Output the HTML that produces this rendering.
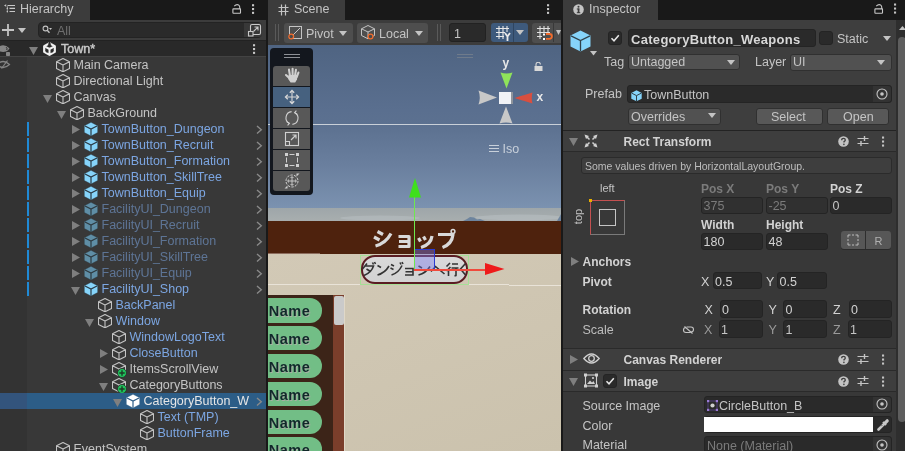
<!DOCTYPE html><html><head><meta charset="utf-8"><style>
html,body{margin:0;padding:0;width:905px;height:451px;overflow:hidden;background:#191919;font-family:"Liberation Sans", sans-serif;}
div,svg{box-sizing:border-box;}
</style></head><body><div style="position:relative;width:905px;height:451px;overflow:hidden;will-change:transform;"><div style="position:absolute;left:0px;top:0px;width:266px;height:451px;background:#383838;"></div><div style="position:absolute;left:0px;top:0px;width:266px;height:20px;background:#191919;"></div><div style="position:absolute;left:0px;top:0px;width:90px;height:20px;background:#3c3c3c;"></div><svg style="position:absolute;left:3px;top:3px;" width="14" height="12" viewBox="0 0 14 12"><path d="M4.5 2.5H12 M6.5 5.3H12 M6.5 8.5H12" stroke="#c8c8c8" stroke-width="1.2"/><path d="M1 2.5L3.2 1.2V3.8Z M3.3 5.3L5 4.2V6.4Z M3.3 8.5L5 7.4V9.6Z" fill="#c8c8c8"/><path d="M4.3 3V9.5" stroke="#c8c8c8" stroke-width="0.6"/></svg><div style="position:absolute;left:20px;top:2.5px;font-size:12.5px;line-height:12.5px;color:#c4c4c4;font-weight:400;white-space:nowrap;">Hierarchy</div><svg style="position:absolute;left:231.5px;top:2.5px;" width="10" height="11" viewBox="0 0 10 11"><path d="M2.3 3.2Q4.3 0.9 6.6 1.9Q7.9 2.7 7.9 5.9" fill="none" stroke="#c8c8c8" stroke-width="1.1"/><rect x="0.9" y="5.9" width="7.6" height="4.3" rx="0.5" fill="none" stroke="#c8c8c8" stroke-width="1.1"/></svg><svg style="position:absolute;left:251px;top:3px;" width="4" height="13" viewBox="0 0 4 13"><g fill="#c8c8c8"><rect x="1" y="1.2" width="2.1" height="2.1"/><rect x="1" y="5" width="2.1" height="2.1"/><rect x="1" y="8.8" width="2.1" height="2.1"/></g></svg><div style="position:absolute;left:0px;top:20px;width:266px;height:19.5px;background:#3c3c3c;"></div><svg style="position:absolute;left:1px;top:23px;" width="14" height="14" viewBox="0 0 14 14"><path d="M7 1V13 M1 7H13" stroke="#c4c4c4" stroke-width="1.8"/></svg><svg style="position:absolute;left:18px;top:28px;" width="8" height="5" viewBox="0 0 8 5"><path d="M0 0L8 0L4.0 5Z" fill="#c4c4c4"/></svg><div style="position:absolute;left:38px;top:22px;width:224px;height:16px;background:#2a2a2a;border:1px solid #232323;border-radius:4px;"></div><svg style="position:absolute;left:42px;top:25px;" width="11" height="10" viewBox="0 0 11 10"><circle cx="3.5" cy="3.5" r="2.4" fill="none" stroke="#c4c4c4" stroke-width="1.1"/><path d="M5.2 5.2L7.5 7.8" stroke="#c4c4c4" stroke-width="1.3"/><path d="M7 3L10 3L8.5 5Z" fill="#c4c4c4"/></svg><div style="position:absolute;left:57px;top:25px;font-size:12.5px;line-height:12.5px;color:#6f6f6f;font-weight:400;white-space:nowrap;">All</div><div style="position:absolute;left:244px;top:23px;width:18px;height:14px;background:#383838;border-radius:0 3px 3px 0;"></div><svg style="position:absolute;left:247px;top:23px;" width="15" height="15" viewBox="0 0 15 15"><rect x="3.5" y="1.5" width="10" height="10" rx="1.5" fill="none" stroke="#c8c8c8" stroke-width="1.1"/><rect x="1.5" y="8.5" width="4.5" height="4.5" fill="#383838" stroke="#c8c8c8" stroke-width="1.1"/><path d="M6.5 8.5L11 4 M7.5 4H11V7.5" fill="none" stroke="#c8c8c8" stroke-width="1.1"/></svg><div style="position:absolute;left:0px;top:39.5px;width:27px;height:411.5px;background:#333333;"></div><div style="position:absolute;left:0px;top:40px;width:266px;height:1px;background:#222222;"></div><div style="position:absolute;left:0px;top:41px;width:266px;height:15px;background:#292929;"></div><div style="position:absolute;left:0px;top:56px;width:266px;height:1px;background:#434343;"></div><svg style="position:absolute;left:0px;top:44px;" width="11" height="13" viewBox="0 0 11 13"><path d="M-3 4.2Q3 -1.5 9.5 4.2Q8.5 6.5 6 7.5Q3 8.5 -3 7Z" fill="#858585"/><path d="M6.2 3.2Q7.5 4.5 6.8 6" stroke="#2a2a2a" stroke-width="1" fill="none"/><rect x="6" y="8" width="4" height="4" rx="0.8" fill="#858585"/></svg><svg style="position:absolute;left:0px;top:59px;" width="11" height="11" viewBox="0 0 11 11"><path d="M-3 5.5Q3 -0.5 9.5 5.5Q3 11.5 -3 5.5Z" fill="none" stroke="#858585" stroke-width="1.2"/><path d="M1.5 9.5L7.5 1.5" stroke="#858585" stroke-width="1.2"/></svg><svg style="position:absolute;left:29px;top:47px;" width="9" height="8" viewBox="0 0 9 8"><path d="M0 0L9 0L4.5 8Z" fill="#7f7f7f"/></svg><svg style="position:absolute;left:43px;top:42px;" width="13" height="14" viewBox="0 0 13 14"><path d="M6.5 1.2L11.8 4.1V9.9L6.5 12.8L1.2 9.9V4.1Z" fill="none" stroke="#f0f0f0" stroke-width="2.2" stroke-linejoin="round"/><path d="M6.5 7V13 M6.5 7L1.5 4.3 M6.5 7L11.5 4.3" stroke="#f0f0f0" stroke-width="2"/><path d="M6.5 0V4.5" stroke="#2c2c2c" stroke-width="1.4"/><path d="M4.6 1.5L6.5 4.6L8.4 1.5Z" fill="#2c2c2c"/><path d="M3 8.2L4.4 10.6 M10 8.2L8.6 10.6" stroke="#2c2c2c" stroke-width="1.2"/></svg><div style="position:absolute;left:61px;top:43px;font-size:12.5px;line-height:12.5px;color:#c8c8c8;font-weight:400;white-space:nowrap;-webkit-text-stroke:0.45px #c8c8c8;">Town*</div><svg style="position:absolute;left:252px;top:43px;" width="4" height="13" viewBox="0 0 4 13"><g fill="#c8c8c8"><rect x="1" y="1.2" width="2.1" height="2.1"/><rect x="1" y="5" width="2.1" height="2.1"/><rect x="1" y="8.8" width="2.1" height="2.1"/></g></svg><svg style="position:absolute;left:55.5px;top:58px;" width="14" height="14" viewBox="0 0 14 14"><path d="M7 0.5L13.5 3.8L13.5 10.5L7 13.8L0.5 10.5L0.5 3.8Z M0.5 3.8L7 7L13.5 3.8 M7 7L7 13.8" fill="none" stroke="#c4c4c4" stroke-width="1.1" stroke-linejoin="round"/></svg><div style="position:absolute;left:73.5px;top:59px;font-size:12.5px;line-height:12.5px;color:#c4c4c4;font-weight:400;white-space:nowrap;">Main Camera</div><svg style="position:absolute;left:55.5px;top:74px;" width="14" height="14" viewBox="0 0 14 14"><path d="M7 0.5L13.5 3.8L13.5 10.5L7 13.8L0.5 10.5L0.5 3.8Z M0.5 3.8L7 7L13.5 3.8 M7 7L7 13.8" fill="none" stroke="#c4c4c4" stroke-width="1.1" stroke-linejoin="round"/></svg><div style="position:absolute;left:73.5px;top:75px;font-size:12.5px;line-height:12.5px;color:#c4c4c4;font-weight:400;white-space:nowrap;">Directional Light</div><svg style="position:absolute;left:43px;top:95px;" width="9" height="8" viewBox="0 0 9 8"><path d="M0 0L9 0L4.5 8Z" fill="#7f7f7f"/></svg><svg style="position:absolute;left:55.5px;top:90px;" width="14" height="14" viewBox="0 0 14 14"><path d="M7 0.5L13.5 3.8L13.5 10.5L7 13.8L0.5 10.5L0.5 3.8Z M0.5 3.8L7 7L13.5 3.8 M7 7L7 13.8" fill="none" stroke="#c4c4c4" stroke-width="1.1" stroke-linejoin="round"/></svg><div style="position:absolute;left:73.5px;top:91px;font-size:12.5px;line-height:12.5px;color:#c4c4c4;font-weight:400;white-space:nowrap;">Canvas</div><svg style="position:absolute;left:57px;top:111px;" width="9" height="8" viewBox="0 0 9 8"><path d="M0 0L9 0L4.5 8Z" fill="#7f7f7f"/></svg><svg style="position:absolute;left:69.5px;top:106px;" width="14" height="14" viewBox="0 0 14 14"><path d="M7 0.5L13.5 3.8L13.5 10.5L7 13.8L0.5 10.5L0.5 3.8Z M0.5 3.8L7 7L13.5 3.8 M7 7L7 13.8" fill="none" stroke="#c4c4c4" stroke-width="1.1" stroke-linejoin="round"/></svg><div style="position:absolute;left:87.5px;top:107px;font-size:12.5px;line-height:12.5px;color:#c4c4c4;font-weight:400;white-space:nowrap;">BackGround</div><div style="position:absolute;left:27px;top:122px;width:2px;height:14px;background:#1f8ad6;"></div><svg style="position:absolute;left:72px;top:125px;" width="8" height="9" viewBox="0 0 8 9"><path d="M0 0L8 4.5L0 9Z" fill="#7f7f7f"/></svg><svg style="position:absolute;left:84px;top:122px;" width="14" height="14" viewBox="0 0 14 14"><g opacity="1"><path d="M7 0.3L13.7 3.7L13.7 10.6L7 14L0.3 10.6L0.3 3.7Z" fill="#86d4fa" stroke="#2a3a44" stroke-width="0.6" stroke-opacity="0.7"/><path d="M1 4L7 7L13 4 M7 7L7 13.8" fill="none" stroke="#2a3a44" stroke-width="1.2"/></g></svg><div style="position:absolute;left:101.5px;top:123px;font-size:12.5px;line-height:12.5px;color:#7ca6e2;font-weight:400;white-space:nowrap;">TownButton_Dungeon</div><svg style="position:absolute;left:256px;top:125px;" width="7" height="10" viewBox="0 0 7 10"><path d="M1 1L5.3 4.8L1 8.6" fill="none" stroke="#8a8a8a" stroke-width="1.4" opacity="1"/></svg><div style="position:absolute;left:27px;top:138px;width:2px;height:14px;background:#1f8ad6;"></div><svg style="position:absolute;left:72px;top:141px;" width="8" height="9" viewBox="0 0 8 9"><path d="M0 0L8 4.5L0 9Z" fill="#7f7f7f"/></svg><svg style="position:absolute;left:84px;top:138px;" width="14" height="14" viewBox="0 0 14 14"><g opacity="1"><path d="M7 0.3L13.7 3.7L13.7 10.6L7 14L0.3 10.6L0.3 3.7Z" fill="#86d4fa" stroke="#2a3a44" stroke-width="0.6" stroke-opacity="0.7"/><path d="M1 4L7 7L13 4 M7 7L7 13.8" fill="none" stroke="#2a3a44" stroke-width="1.2"/></g></svg><div style="position:absolute;left:101.5px;top:139px;font-size:12.5px;line-height:12.5px;color:#7ca6e2;font-weight:400;white-space:nowrap;">TownButton_Recruit</div><svg style="position:absolute;left:256px;top:141px;" width="7" height="10" viewBox="0 0 7 10"><path d="M1 1L5.3 4.8L1 8.6" fill="none" stroke="#8a8a8a" stroke-width="1.4" opacity="1"/></svg><div style="position:absolute;left:27px;top:154px;width:2px;height:14px;background:#1f8ad6;"></div><svg style="position:absolute;left:72px;top:157px;" width="8" height="9" viewBox="0 0 8 9"><path d="M0 0L8 4.5L0 9Z" fill="#7f7f7f"/></svg><svg style="position:absolute;left:84px;top:154px;" width="14" height="14" viewBox="0 0 14 14"><g opacity="1"><path d="M7 0.3L13.7 3.7L13.7 10.6L7 14L0.3 10.6L0.3 3.7Z" fill="#86d4fa" stroke="#2a3a44" stroke-width="0.6" stroke-opacity="0.7"/><path d="M1 4L7 7L13 4 M7 7L7 13.8" fill="none" stroke="#2a3a44" stroke-width="1.2"/></g></svg><div style="position:absolute;left:101.5px;top:155px;font-size:12.5px;line-height:12.5px;color:#7ca6e2;font-weight:400;white-space:nowrap;">TownButton_Formation</div><svg style="position:absolute;left:256px;top:157px;" width="7" height="10" viewBox="0 0 7 10"><path d="M1 1L5.3 4.8L1 8.6" fill="none" stroke="#8a8a8a" stroke-width="1.4" opacity="1"/></svg><div style="position:absolute;left:27px;top:170px;width:2px;height:14px;background:#1f8ad6;"></div><svg style="position:absolute;left:72px;top:173px;" width="8" height="9" viewBox="0 0 8 9"><path d="M0 0L8 4.5L0 9Z" fill="#7f7f7f"/></svg><svg style="position:absolute;left:84px;top:170px;" width="14" height="14" viewBox="0 0 14 14"><g opacity="1"><path d="M7 0.3L13.7 3.7L13.7 10.6L7 14L0.3 10.6L0.3 3.7Z" fill="#86d4fa" stroke="#2a3a44" stroke-width="0.6" stroke-opacity="0.7"/><path d="M1 4L7 7L13 4 M7 7L7 13.8" fill="none" stroke="#2a3a44" stroke-width="1.2"/></g></svg><div style="position:absolute;left:101.5px;top:171px;font-size:12.5px;line-height:12.5px;color:#7ca6e2;font-weight:400;white-space:nowrap;">TownButton_SkillTree</div><svg style="position:absolute;left:256px;top:173px;" width="7" height="10" viewBox="0 0 7 10"><path d="M1 1L5.3 4.8L1 8.6" fill="none" stroke="#8a8a8a" stroke-width="1.4" opacity="1"/></svg><div style="position:absolute;left:27px;top:186px;width:2px;height:14px;background:#1f8ad6;"></div><svg style="position:absolute;left:72px;top:189px;" width="8" height="9" viewBox="0 0 8 9"><path d="M0 0L8 4.5L0 9Z" fill="#7f7f7f"/></svg><svg style="position:absolute;left:84px;top:186px;" width="14" height="14" viewBox="0 0 14 14"><g opacity="1"><path d="M7 0.3L13.7 3.7L13.7 10.6L7 14L0.3 10.6L0.3 3.7Z" fill="#86d4fa" stroke="#2a3a44" stroke-width="0.6" stroke-opacity="0.7"/><path d="M1 4L7 7L13 4 M7 7L7 13.8" fill="none" stroke="#2a3a44" stroke-width="1.2"/></g></svg><div style="position:absolute;left:101.5px;top:187px;font-size:12.5px;line-height:12.5px;color:#7ca6e2;font-weight:400;white-space:nowrap;">TownButton_Equip</div><svg style="position:absolute;left:256px;top:189px;" width="7" height="10" viewBox="0 0 7 10"><path d="M1 1L5.3 4.8L1 8.6" fill="none" stroke="#8a8a8a" stroke-width="1.4" opacity="1"/></svg><div style="position:absolute;left:27px;top:202px;width:2px;height:14px;background:#1f8ad6;"></div><svg style="position:absolute;left:72px;top:205px;" width="8" height="9" viewBox="0 0 8 9"><path d="M0 0L8 4.5L0 9Z" fill="#7f7f7f"/></svg><svg style="position:absolute;left:84px;top:202px;" width="14" height="14" viewBox="0 0 14 14"><g opacity="1"><path d="M7 0.3L13.7 3.7L13.7 10.6L7 14L0.3 10.6L0.3 3.7Z" fill="#5f8ea6" stroke="#2e3a40" stroke-width="0.6" stroke-opacity="0.7"/><path d="M1 4L7 7L13 4 M7 7L7 13.8" fill="none" stroke="#2e3a40" stroke-width="1.2"/></g></svg><div style="position:absolute;left:101.5px;top:203px;font-size:12.5px;line-height:12.5px;color:#7ca6e2;font-weight:400;white-space:nowrap;opacity:0.55;">FacilityUI_Dungeon</div><svg style="position:absolute;left:256px;top:205px;" width="7" height="10" viewBox="0 0 7 10"><path d="M1 1L5.3 4.8L1 8.6" fill="none" stroke="#8a8a8a" stroke-width="1.4" opacity="1"/></svg><div style="position:absolute;left:27px;top:218px;width:2px;height:14px;background:#1f8ad6;"></div><svg style="position:absolute;left:72px;top:221px;" width="8" height="9" viewBox="0 0 8 9"><path d="M0 0L8 4.5L0 9Z" fill="#7f7f7f"/></svg><svg style="position:absolute;left:84px;top:218px;" width="14" height="14" viewBox="0 0 14 14"><g opacity="1"><path d="M7 0.3L13.7 3.7L13.7 10.6L7 14L0.3 10.6L0.3 3.7Z" fill="#5f8ea6" stroke="#2e3a40" stroke-width="0.6" stroke-opacity="0.7"/><path d="M1 4L7 7L13 4 M7 7L7 13.8" fill="none" stroke="#2e3a40" stroke-width="1.2"/></g></svg><div style="position:absolute;left:101.5px;top:219px;font-size:12.5px;line-height:12.5px;color:#7ca6e2;font-weight:400;white-space:nowrap;opacity:0.55;">FacilityUI_Recruit</div><svg style="position:absolute;left:256px;top:221px;" width="7" height="10" viewBox="0 0 7 10"><path d="M1 1L5.3 4.8L1 8.6" fill="none" stroke="#8a8a8a" stroke-width="1.4" opacity="1"/></svg><div style="position:absolute;left:27px;top:234px;width:2px;height:14px;background:#1f8ad6;"></div><svg style="position:absolute;left:72px;top:237px;" width="8" height="9" viewBox="0 0 8 9"><path d="M0 0L8 4.5L0 9Z" fill="#7f7f7f"/></svg><svg style="position:absolute;left:84px;top:234px;" width="14" height="14" viewBox="0 0 14 14"><g opacity="1"><path d="M7 0.3L13.7 3.7L13.7 10.6L7 14L0.3 10.6L0.3 3.7Z" fill="#5f8ea6" stroke="#2e3a40" stroke-width="0.6" stroke-opacity="0.7"/><path d="M1 4L7 7L13 4 M7 7L7 13.8" fill="none" stroke="#2e3a40" stroke-width="1.2"/></g></svg><div style="position:absolute;left:101.5px;top:235px;font-size:12.5px;line-height:12.5px;color:#7ca6e2;font-weight:400;white-space:nowrap;opacity:0.55;">FacilityUI_Formation</div><svg style="position:absolute;left:256px;top:237px;" width="7" height="10" viewBox="0 0 7 10"><path d="M1 1L5.3 4.8L1 8.6" fill="none" stroke="#8a8a8a" stroke-width="1.4" opacity="1"/></svg><div style="position:absolute;left:27px;top:250px;width:2px;height:14px;background:#1f8ad6;"></div><svg style="position:absolute;left:72px;top:253px;" width="8" height="9" viewBox="0 0 8 9"><path d="M0 0L8 4.5L0 9Z" fill="#7f7f7f"/></svg><svg style="position:absolute;left:84px;top:250px;" width="14" height="14" viewBox="0 0 14 14"><g opacity="1"><path d="M7 0.3L13.7 3.7L13.7 10.6L7 14L0.3 10.6L0.3 3.7Z" fill="#5f8ea6" stroke="#2e3a40" stroke-width="0.6" stroke-opacity="0.7"/><path d="M1 4L7 7L13 4 M7 7L7 13.8" fill="none" stroke="#2e3a40" stroke-width="1.2"/></g></svg><div style="position:absolute;left:101.5px;top:251px;font-size:12.5px;line-height:12.5px;color:#7ca6e2;font-weight:400;white-space:nowrap;opacity:0.55;">FacilityUI_SkillTree</div><svg style="position:absolute;left:256px;top:253px;" width="7" height="10" viewBox="0 0 7 10"><path d="M1 1L5.3 4.8L1 8.6" fill="none" stroke="#8a8a8a" stroke-width="1.4" opacity="1"/></svg><div style="position:absolute;left:27px;top:266px;width:2px;height:14px;background:#1f8ad6;"></div><svg style="position:absolute;left:72px;top:269px;" width="8" height="9" viewBox="0 0 8 9"><path d="M0 0L8 4.5L0 9Z" fill="#7f7f7f"/></svg><svg style="position:absolute;left:84px;top:266px;" width="14" height="14" viewBox="0 0 14 14"><g opacity="1"><path d="M7 0.3L13.7 3.7L13.7 10.6L7 14L0.3 10.6L0.3 3.7Z" fill="#5f8ea6" stroke="#2e3a40" stroke-width="0.6" stroke-opacity="0.7"/><path d="M1 4L7 7L13 4 M7 7L7 13.8" fill="none" stroke="#2e3a40" stroke-width="1.2"/></g></svg><div style="position:absolute;left:101.5px;top:267px;font-size:12.5px;line-height:12.5px;color:#7ca6e2;font-weight:400;white-space:nowrap;opacity:0.55;">FacilityUI_Equip</div><svg style="position:absolute;left:256px;top:269px;" width="7" height="10" viewBox="0 0 7 10"><path d="M1 1L5.3 4.8L1 8.6" fill="none" stroke="#8a8a8a" stroke-width="1.4" opacity="1"/></svg><div style="position:absolute;left:27px;top:282px;width:2px;height:14px;background:#1f8ad6;"></div><svg style="position:absolute;left:71px;top:287px;" width="9" height="8" viewBox="0 0 9 8"><path d="M0 0L9 0L4.5 8Z" fill="#7f7f7f"/></svg><svg style="position:absolute;left:84px;top:282px;" width="14" height="14" viewBox="0 0 14 14"><g opacity="1"><path d="M7 0.3L13.7 3.7L13.7 10.6L7 14L0.3 10.6L0.3 3.7Z" fill="#86d4fa" stroke="#2a3a44" stroke-width="0.6" stroke-opacity="0.7"/><path d="M1 4L7 7L13 4 M7 7L7 13.8" fill="none" stroke="#2a3a44" stroke-width="1.2"/></g></svg><div style="position:absolute;left:101.5px;top:283px;font-size:12.5px;line-height:12.5px;color:#7ca6e2;font-weight:400;white-space:nowrap;">FacilityUI_Shop</div><svg style="position:absolute;left:256px;top:285px;" width="7" height="10" viewBox="0 0 7 10"><path d="M1 1L5.3 4.8L1 8.6" fill="none" stroke="#8a8a8a" stroke-width="1.4" opacity="1"/></svg><svg style="position:absolute;left:97.5px;top:298px;" width="14" height="14" viewBox="0 0 14 14"><path d="M7 0.5L13.5 3.8L13.5 10.5L7 13.8L0.5 10.5L0.5 3.8Z M0.5 3.8L7 7L13.5 3.8 M7 7L7 13.8" fill="none" stroke="#c4c4c4" stroke-width="1.1" stroke-linejoin="round"/></svg><div style="position:absolute;left:115.5px;top:299px;font-size:12.5px;line-height:12.5px;color:#7ca6e2;font-weight:400;white-space:nowrap;">BackPanel</div><svg style="position:absolute;left:85px;top:319px;" width="9" height="8" viewBox="0 0 9 8"><path d="M0 0L9 0L4.5 8Z" fill="#7f7f7f"/></svg><svg style="position:absolute;left:97.5px;top:314px;" width="14" height="14" viewBox="0 0 14 14"><path d="M7 0.5L13.5 3.8L13.5 10.5L7 13.8L0.5 10.5L0.5 3.8Z M0.5 3.8L7 7L13.5 3.8 M7 7L7 13.8" fill="none" stroke="#c4c4c4" stroke-width="1.1" stroke-linejoin="round"/></svg><div style="position:absolute;left:115.5px;top:315px;font-size:12.5px;line-height:12.5px;color:#7ca6e2;font-weight:400;white-space:nowrap;">Window</div><svg style="position:absolute;left:111.5px;top:330px;" width="14" height="14" viewBox="0 0 14 14"><path d="M7 0.5L13.5 3.8L13.5 10.5L7 13.8L0.5 10.5L0.5 3.8Z M0.5 3.8L7 7L13.5 3.8 M7 7L7 13.8" fill="none" stroke="#c4c4c4" stroke-width="1.1" stroke-linejoin="round"/></svg><div style="position:absolute;left:129.5px;top:331px;font-size:12.5px;line-height:12.5px;color:#7ca6e2;font-weight:400;white-space:nowrap;">WindowLogoText</div><svg style="position:absolute;left:100px;top:349px;" width="8" height="9" viewBox="0 0 8 9"><path d="M0 0L8 4.5L0 9Z" fill="#7f7f7f"/></svg><svg style="position:absolute;left:111.5px;top:346px;" width="14" height="14" viewBox="0 0 14 14"><path d="M7 0.5L13.5 3.8L13.5 10.5L7 13.8L0.5 10.5L0.5 3.8Z M0.5 3.8L7 7L13.5 3.8 M7 7L7 13.8" fill="none" stroke="#c4c4c4" stroke-width="1.1" stroke-linejoin="round"/></svg><div style="position:absolute;left:129.5px;top:347px;font-size:12.5px;line-height:12.5px;color:#7ca6e2;font-weight:400;white-space:nowrap;">CloseButton</div><svg style="position:absolute;left:100px;top:365px;" width="8" height="9" viewBox="0 0 8 9"><path d="M0 0L8 4.5L0 9Z" fill="#7f7f7f"/></svg><svg style="position:absolute;left:111.5px;top:362px;" width="14" height="14" viewBox="0 0 14 14"><path d="M7 0.5L13.5 3.8L13.5 10.5L7 13.8L0.5 10.5L0.5 3.8Z M0.5 3.8L7 7L13.5 3.8 M7 7L7 13.8" fill="none" stroke="#c4c4c4" stroke-width="1.1" stroke-linejoin="round"/></svg><svg style="position:absolute;left:117px;top:367.5px;" width="10" height="10" viewBox="0 0 10 10"><circle cx="5" cy="5" r="4.5" fill="#1fc35c" stroke="#2a2a2a" stroke-width="0.8"/><path d="M5 2.3V7.7 M2.3 5H7.7" stroke="#1e3a26" stroke-width="1.4"/></svg><div style="position:absolute;left:129.5px;top:363px;font-size:12.5px;line-height:12.5px;color:#c4c4c4;font-weight:400;white-space:nowrap;">ItemsScrollView</div><svg style="position:absolute;left:99px;top:383px;" width="9" height="8" viewBox="0 0 9 8"><path d="M0 0L9 0L4.5 8Z" fill="#7f7f7f"/></svg><svg style="position:absolute;left:111.5px;top:378px;" width="14" height="14" viewBox="0 0 14 14"><path d="M7 0.5L13.5 3.8L13.5 10.5L7 13.8L0.5 10.5L0.5 3.8Z M0.5 3.8L7 7L13.5 3.8 M7 7L7 13.8" fill="none" stroke="#c4c4c4" stroke-width="1.1" stroke-linejoin="round"/></svg><svg style="position:absolute;left:117px;top:383.5px;" width="10" height="10" viewBox="0 0 10 10"><circle cx="5" cy="5" r="4.5" fill="#1fc35c" stroke="#2a2a2a" stroke-width="0.8"/><path d="M5 2.3V7.7 M2.3 5H7.7" stroke="#1e3a26" stroke-width="1.4"/></svg><div style="position:absolute;left:129.5px;top:379px;font-size:12.5px;line-height:12.5px;color:#c4c4c4;font-weight:400;white-space:nowrap;">CategoryButtons</div><div style="position:absolute;left:0px;top:393px;width:266px;height:16px;background:#2c5d87;"></div><div style="position:absolute;left:0px;top:393px;width:27px;height:16px;background:#33547c;"></div><svg style="position:absolute;left:113px;top:399px;" width="9" height="8" viewBox="0 0 9 8"><path d="M0 0L9 0L4.5 8Z" fill="#7f7f7f"/></svg><svg style="position:absolute;left:126px;top:394px;" width="14" height="14" viewBox="0 0 14 14"><g opacity="1"><path d="M7 0.3L13.7 3.7L13.7 10.6L7 14L0.3 10.6L0.3 3.7Z" fill="#ffffff" stroke="#2c5d87" stroke-width="0.6" stroke-opacity="0.7"/><path d="M1 4L7 7L13 4 M7 7L7 13.8" fill="none" stroke="#2c5d87" stroke-width="1.2"/></g></svg><div style="position:absolute;left:143.5px;top:395px;font-size:12.5px;line-height:12.5px;color:#e6e6e6;font-weight:400;white-space:nowrap;">CategoryButton_W</div><svg style="position:absolute;left:256px;top:397px;" width="7" height="10" viewBox="0 0 7 10"><path d="M1 1L5.3 4.8L1 8.6" fill="none" stroke="#8a8a8a" stroke-width="1.4" opacity="1"/></svg><svg style="position:absolute;left:139.5px;top:410px;" width="14" height="14" viewBox="0 0 14 14"><path d="M7 0.5L13.5 3.8L13.5 10.5L7 13.8L0.5 10.5L0.5 3.8Z M0.5 3.8L7 7L13.5 3.8 M7 7L7 13.8" fill="none" stroke="#c4c4c4" stroke-width="1.1" stroke-linejoin="round"/></svg><div style="position:absolute;left:157.5px;top:411px;font-size:12.5px;line-height:12.5px;color:#7ca6e2;font-weight:400;white-space:nowrap;">Text (TMP)</div><svg style="position:absolute;left:139.5px;top:426px;" width="14" height="14" viewBox="0 0 14 14"><path d="M7 0.5L13.5 3.8L13.5 10.5L7 13.8L0.5 10.5L0.5 3.8Z M0.5 3.8L7 7L13.5 3.8 M7 7L7 13.8" fill="none" stroke="#c4c4c4" stroke-width="1.1" stroke-linejoin="round"/></svg><div style="position:absolute;left:157.5px;top:427px;font-size:12.5px;line-height:12.5px;color:#7ca6e2;font-weight:400;white-space:nowrap;">ButtonFrame</div><svg style="position:absolute;left:55.5px;top:442px;" width="14" height="14" viewBox="0 0 14 14"><path d="M7 0.5L13.5 3.8L13.5 10.5L7 13.8L0.5 10.5L0.5 3.8Z M0.5 3.8L7 7L13.5 3.8 M7 7L7 13.8" fill="none" stroke="#c4c4c4" stroke-width="1.1" stroke-linejoin="round"/></svg><div style="position:absolute;left:73.5px;top:443px;font-size:12.5px;line-height:12.5px;color:#c4c4c4;font-weight:400;white-space:nowrap;">EventSystem</div><div style="position:absolute;left:266px;top:0px;width:2px;height:451px;background:#191919;"></div><div style="position:absolute;left:268px;top:0px;width:293px;height:20px;background:#191919;"></div><div style="position:absolute;left:268px;top:0px;width:77px;height:20px;background:#3c3c3c;"></div><svg style="position:absolute;left:278px;top:3.5px;" width="11" height="12" viewBox="0 0 11 12"><path d="M3.5 0.5V11.5 M7.5 0.5V11.5 M0.5 3.5H10.5 M0.5 7.5H10.5" stroke="#c4c4c4" stroke-width="1.2"/></svg><div style="position:absolute;left:294px;top:2.5px;font-size:12.5px;line-height:12.5px;color:#c4c4c4;font-weight:400;white-space:nowrap;">Scene</div><svg style="position:absolute;left:546px;top:3px;" width="4" height="13" viewBox="0 0 4 13"><g fill="#c8c8c8"><rect x="1" y="1.2" width="2.1" height="2.1"/><rect x="1" y="5" width="2.1" height="2.1"/><rect x="1" y="8.8" width="2.1" height="2.1"/></g></svg><div style="position:absolute;left:268px;top:20px;width:293px;height:25px;background:#3c3c3c;"></div><div style="position:absolute;left:275px;top:24px;width:1px;height:17px;background:#5a5a5a;"></div><div style="position:absolute;left:278px;top:24px;width:1px;height:17px;background:#5a5a5a;"></div><div style="position:absolute;left:284px;top:23px;width:69px;height:19.5px;background:#4e4e4e;border-radius:3px;"></div><svg style="position:absolute;left:288px;top:26px;" width="14" height="14" viewBox="0 0 14 14"><rect x="1.5" y="0.5" width="12" height="12" fill="none" stroke="#c4c4c4" stroke-width="1"/><path d="M5 9L12 2" stroke="#c4c4c4" stroke-width="1"/><circle cx="3.2" cy="10.5" r="2.4" fill="#4b4b4b" stroke="#f26b2b" stroke-width="1.2"/></svg><div style="position:absolute;left:306px;top:27.5px;font-size:12.5px;line-height:12.5px;color:#c4c4c4;font-weight:400;white-space:nowrap;">Pivot</div><svg style="position:absolute;left:339px;top:31px;" width="8" height="5" viewBox="0 0 8 5"><path d="M0 0L8 0L4.0 5Z" fill="#c4c4c4"/></svg><div style="position:absolute;left:357px;top:23px;width:71px;height:19.5px;background:#4e4e4e;border-radius:3px;"></div><svg style="position:absolute;left:361px;top:25px;" width="14" height="15" viewBox="0 0 14 15"><path d="M7 0.5L13.5 3.8L13.5 10.5L7 13.8L0.5 10.5L0.5 3.8Z M0.5 3.8L7 7L13.5 3.8 M7 7L7 13.8" fill="none" stroke="#c4c4c4" stroke-width="1"/><circle cx="9.5" cy="11.5" r="2.4" fill="#4b4b4b" stroke="#f26b2b" stroke-width="1.2"/></svg><div style="position:absolute;left:379px;top:27.5px;font-size:12.5px;line-height:12.5px;color:#c4c4c4;font-weight:400;white-space:nowrap;">Local</div><svg style="position:absolute;left:415px;top:31px;" width="8" height="5" viewBox="0 0 8 5"><path d="M0 0L8 0L4.0 5Z" fill="#c4c4c4"/></svg><div style="position:absolute;left:437px;top:24px;width:1px;height:17px;background:#5a5a5a;"></div><div style="position:absolute;left:440px;top:24px;width:1px;height:17px;background:#5a5a5a;"></div><div style="position:absolute;left:449px;top:23px;width:37px;height:19px;background:#2a2a2a;border:1px solid #222;border-radius:3px;"></div><div style="position:absolute;left:454px;top:27.5px;font-size:12.5px;line-height:12.5px;color:#c4c4c4;font-weight:400;white-space:nowrap;">1</div><div style="position:absolute;left:491px;top:23px;width:37px;height:19px;background:#3e5a7c;border-radius:3px;"></div><div style="position:absolute;left:513px;top:23px;width:1px;height:19px;background:#2f4560;"></div><svg style="position:absolute;left:496px;top:26px;" width="17" height="16" viewBox="0 0 17 16"><path d="M3 0V13 M7 0V13 M11 0V6 M0 2.5H13 M0 6.5H9 M0 10.5H8" stroke="#e8e8e8" stroke-width="1.1"/><path d="M9 7L11.5 10.5L14 7 M11.5 10.5V15" fill="none" stroke="#e8e8e8" stroke-width="1.8"/></svg><svg style="position:absolute;left:516px;top:30px;" width="8" height="5" viewBox="0 0 8 5"><path d="M0 0L8 0L4.0 5Z" fill="#c4c4c4"/></svg><div style="position:absolute;left:532px;top:23px;width:29px;height:19.5px;background:#4e4e4e;border-radius:3px 0 0 3px;"></div><svg style="position:absolute;left:537px;top:26px;" width="17" height="16" viewBox="0 0 17 16"><path d="M3 0V13 M7 0V6 M11 0V6 M0 2.5H13 M0 6.5H13 M0 10.5H5" stroke="#e0e0e0" stroke-width="1.1"/><rect x="6" y="7.5" width="2" height="2" fill="#fff"/><rect x="6" y="12" width="2" height="2" fill="#fff"/><path d="M9 8H12.5a2.4 2.4 0 0 1 0 4.8H9" fill="none" stroke="#f26b2b" stroke-width="1.8"/></svg><div style="position:absolute;left:553px;top:23px;width:1px;height:19px;background:#383838;"></div><svg style="position:absolute;left:556px;top:30px;" width="5" height="5" viewBox="0 0 5 5"><path d="M0 0L5 0L2.5 5Z" fill="#c4c4c4"/></svg><div style="position:absolute;left:268px;top:45px;width:293px;height:406px;overflow:hidden;background:#d0c7b3;"><div style="position:absolute;left:0px;top:0px;width:293px;height:163px;background:linear-gradient(#4f6482 0px,#5a6f8f 65px,#5c7190 80px,#6a7f9e 120px,#7b92b0 163px);"></div><div style="position:absolute;left:0px;top:163px;width:293px;height:13px;background:linear-gradient(#9ea6a9,#a8aeaf);"></div><svg style="position:absolute;left:0px;top:163px;" width="293" height="13" viewBox="0 0 293 13"><g transform="translate(-268,-208)"><ellipse cx="380" cy="218" rx="40" ry="2.5" fill="#b6bcbf" opacity="0.6"/><ellipse cx="520" cy="217.5" rx="45" ry="3" fill="#b8bec2" opacity="0.6"/><path d="M463 221L467 219L470 217L474 217.5L477 219.5L480 219L485 221Z" fill="#6d849e"/><path d="M557 221L561 214V221Z" fill="#6d849e"/></g></svg><div style="position:absolute;left:0px;top:176px;width:293px;height:32.5px;background:#4e220d;"></div><div style="position:absolute;left:0px;top:208px;width:52px;height:1px;background:#8d6d5e;"></div><div style="position:absolute;left:0px;top:208.5px;width:293px;height:198px;background:linear-gradient(160deg,#d2c9b6,#cbc2ad);"></div><svg style="position:absolute;left:0px;top:0px;" width="293" height="406" viewBox="0 0 293 406"><g transform="translate(-268,-45)"><g fill="none" stroke="#d9d9d9" stroke-width="3.2" stroke-linecap="butt" stroke-linejoin="round"><path d="M377.5 231.5L383 234.5 M374 237L379.5 240 M375.5 246Q386 243 391 233.5"/><path d="M398.5 236.5H409V246.5H398.5 M399 241.5H409"/><path d="M418.5 238L420.5 241.5 M423.5 236.5L425.5 240 M421 247.5Q431 244.5 432 236"/><path d="M438 234.5H453Q452 244 442.5 247.5"/></g><circle cx="453" cy="231.5" r="1.9" fill="none" stroke="#d9d9d9" stroke-width="1.5"/></g></svg><div style="position:absolute;left:0px;top:79px;width:293px;height:1px;background:#c9d0d8;"></div><div style="position:absolute;left:0px;top:239px;width:241px;height:1px;background:#e9e3d8;"></div><div style="position:absolute;left:241px;top:240px;width:52px;height:1px;background:#e9e3d8;"></div><div style="position:absolute;left:0px;top:250px;width:65px;height:160px;background:#3c2418;"></div><div style="position:absolute;left:65px;top:250px;width:11px;height:160px;background:#7a3e2b;"></div><div style="position:absolute;left:66px;top:251px;width:10px;height:29px;background:#cacaca;border-radius:2px;"></div><div style="position:absolute;left:76px;top:250px;width:1px;height:160px;background:#e0d8c8;"></div><div style="position:absolute;left:-18px;top:253.39999999999998px;width:71.5px;height:24.3px;background:#72be86;border-radius:0 12px 12px 0;"></div><div style="position:absolute;left:1.8000000000000114px;top:260.29999999999995px;font-size:14.5px;line-height:14.5px;color:#a8b0a4;font-weight:700;white-space:nowrap;letter-spacing:0.5px;">Name</div><div style="position:absolute;left:0.8000000000000114px;top:259.29999999999995px;font-size:14.5px;line-height:14.5px;color:#10292a;font-weight:700;white-space:nowrap;letter-spacing:0.5px;">Name</div><div style="position:absolute;left:-18px;top:281.2px;width:71.5px;height:24.3px;background:#72be86;border-radius:0 12px 12px 0;"></div><div style="position:absolute;left:1.8000000000000114px;top:288.09999999999997px;font-size:14.5px;line-height:14.5px;color:#a8b0a4;font-weight:700;white-space:nowrap;letter-spacing:0.5px;">Name</div><div style="position:absolute;left:0.8000000000000114px;top:287.09999999999997px;font-size:14.5px;line-height:14.5px;color:#10292a;font-weight:700;white-space:nowrap;letter-spacing:0.5px;">Name</div><div style="position:absolute;left:-18px;top:309.0px;width:71.5px;height:24.3px;background:#72be86;border-radius:0 12px 12px 0;"></div><div style="position:absolute;left:1.8000000000000114px;top:315.9px;font-size:14.5px;line-height:14.5px;color:#a8b0a4;font-weight:700;white-space:nowrap;letter-spacing:0.5px;">Name</div><div style="position:absolute;left:0.8000000000000114px;top:314.9px;font-size:14.5px;line-height:14.5px;color:#10292a;font-weight:700;white-space:nowrap;letter-spacing:0.5px;">Name</div><div style="position:absolute;left:-18px;top:336.79999999999995px;width:71.5px;height:24.3px;background:#72be86;border-radius:0 12px 12px 0;"></div><div style="position:absolute;left:1.8000000000000114px;top:343.69999999999993px;font-size:14.5px;line-height:14.5px;color:#a8b0a4;font-weight:700;white-space:nowrap;letter-spacing:0.5px;">Name</div><div style="position:absolute;left:0.8000000000000114px;top:342.69999999999993px;font-size:14.5px;line-height:14.5px;color:#10292a;font-weight:700;white-space:nowrap;letter-spacing:0.5px;">Name</div><div style="position:absolute;left:-18px;top:364.59999999999997px;width:71.5px;height:24.3px;background:#72be86;border-radius:0 12px 12px 0;"></div><div style="position:absolute;left:1.8000000000000114px;top:371.49999999999994px;font-size:14.5px;line-height:14.5px;color:#a8b0a4;font-weight:700;white-space:nowrap;letter-spacing:0.5px;">Name</div><div style="position:absolute;left:0.8000000000000114px;top:370.49999999999994px;font-size:14.5px;line-height:14.5px;color:#10292a;font-weight:700;white-space:nowrap;letter-spacing:0.5px;">Name</div><div style="position:absolute;left:-18px;top:392.4px;width:71.5px;height:24.3px;background:#72be86;border-radius:0 12px 12px 0;"></div><div style="position:absolute;left:1.8000000000000114px;top:399.29999999999995px;font-size:14.5px;line-height:14.5px;color:#a8b0a4;font-weight:700;white-space:nowrap;letter-spacing:0.5px;">Name</div><div style="position:absolute;left:0.8000000000000114px;top:398.29999999999995px;font-size:14.5px;line-height:14.5px;color:#10292a;font-weight:700;white-space:nowrap;letter-spacing:0.5px;">Name</div><div style="position:absolute;left:92px;top:209.5px;width:109px;height:30px;background:transparent;border:1px solid #a6df96;"></div><div style="position:absolute;left:93px;top:210.2px;width:107px;height:28.5px;background:linear-gradient(#dadada,#d2d2d2);border:2px solid #5a1c22;border-radius:14px;"></div><svg style="position:absolute;left:0px;top:0px;" width="293" height="406" viewBox="0 0 293 406"><g transform="translate(-268,-45)" fill="none" stroke="#333333" stroke-width="1.6" stroke-linecap="butt" stroke-linejoin="miter"><path d="M367 263.5L362.5 269 M365.5 266H373.5Q371.5 272.5 364 275.5 M366.5 269L370.5 271.5 M372.5 262.5L373.5 264.5 M374.5 262L375.5 264"/><path d="M377.5 265.5L381 267.5 M377.5 275Q385 273 389 266"/><path d="M391 264.5L394 266 M390.5 268L393.5 269.5 M391.5 275Q398.5 273 402 265.5 M400 262.5L401 264.5 M402 262L403 264"/><path d="M405 268.5H413V275H405 M405.5 271.7H413"/><path d="M418.5 266L422 268 M418.5 275Q426 273 430 266.5"/><path d="M431 271.5L435.5 266.5L444.5 274"/><path d="M450 263L446.5 266.5 M450.5 267L446.5 271 M448.5 269V276 M452 264H458 M451.5 268H458.5 M456 268V275.5Q456 276 454.5 275.5"/><path d="M465.5 263.5L460.5 269L465.5 275"/></g></svg><div style="position:absolute;left:146px;top:204px;width:21px;height:20.5px;background:rgba(120,120,235,0.42);border-top:1px solid #2b3bd0;border-right:1px solid #2b3bd0;"></div><div style="position:absolute;left:145.5px;top:151px;width:1px;height:74px;background:#6ee84e;"></div><svg style="position:absolute;left:140px;top:133px;" width="14" height="20" viewBox="0 0 14 20"><path d="M7 0L13 19.5H1Z" fill="#3fe01c"/></svg><div style="position:absolute;left:146px;top:224px;width:71px;height:1.6px;background:#f04a3c;"></div><svg style="position:absolute;left:216.5px;top:218px;" width="20" height="12" viewBox="0 0 20 12"><path d="M0 0L19.5 6L0 12Z" fill="#ee1a1a"/></svg><div style="position:absolute;left:2px;top:3px;width:43px;height:146.5px;background:#13171e;border-radius:4px;"></div><div style="position:absolute;left:16px;top:9px;width:16px;height:1px;background:#8d9096;"></div><div style="position:absolute;left:16px;top:12px;width:16px;height:1px;background:#8d9096;"></div><div style="position:absolute;left:5px;top:21px;width:37px;height:20px;background:#585858;border-radius:3px 3px 0 0;"></div><div style="position:absolute;left:5px;top:42px;width:37px;height:20px;background:#46617f;border-radius:0;"></div><div style="position:absolute;left:5px;top:63px;width:37px;height:20px;background:#585858;border-radius:0;"></div><div style="position:absolute;left:5px;top:84px;width:37px;height:20px;background:#585858;border-radius:0;"></div><div style="position:absolute;left:5px;top:105px;width:37px;height:20px;background:#585858;border-radius:0;"></div><div style="position:absolute;left:5px;top:126px;width:37px;height:20px;background:#585858;border-radius:0 0 3px 3px;"></div><svg style="position:absolute;left:16px;top:22px;" width="17" height="17" viewBox="0 0 17 17"><g stroke="#d0d0d0" stroke-width="2.1" stroke-linecap="round"><path d="M6 9L5 2.6 M8.6 9V1.8 M11 9L11.9 2.8 M12.8 10L14.4 5.6 M5.8 11.5L2 8"/></g><path d="M4.6 8H13.6L13 12.5L11.2 15.6H6.6L4.2 12Z" fill="#d0d0d0"/></svg><svg style="position:absolute;left:16px;top:44px;" width="16" height="16" viewBox="0 0 16 16"><path d="M8 2V14 M2 8H14" stroke="#d8d8d8" stroke-width="1.1"/><path d="M5.8 3.8L8 1.5L10.2 3.8 M5.8 12.2L8 14.5L10.2 12.2 M3.8 5.8L1.5 8L3.8 10.2 M12.2 5.8L14.5 8L12.2 10.2" fill="none" stroke="#d8d8d8" stroke-width="1.3"/></svg><svg style="position:absolute;left:16px;top:65px;" width="16" height="16" viewBox="0 0 16 16"><g fill="none" stroke="#d0d0d0" stroke-width="1.1"><path d="M7.6 1.6A6.2 6.2 0 0 0 5.2 13.2"/><path d="M2.6 11.6L5.4 13.3L3.6 15.3"/><path d="M8.4 14.4A6.2 6.2 0 0 0 10.8 2.8"/><path d="M13.4 4.4L10.6 2.7L12.4 0.7"/></g></svg><svg style="position:absolute;left:16px;top:86px;" width="16" height="16" viewBox="0 0 16 16"><rect x="1.5" y="1.5" width="13" height="13" fill="none" stroke="#d0d0d0" stroke-width="1.1"/><path d="M1.5 10.5H5.5V14.5" fill="none" stroke="#d0d0d0" stroke-width="1.1"/><path d="M7 9L12 4 M8.5 4H12V7.5" fill="none" stroke="#d0d0d0" stroke-width="1.2"/></svg><svg style="position:absolute;left:16px;top:107px;" width="16" height="16" viewBox="0 0 16 16"><g fill="#d0d0d0"><rect x="1" y="1" width="3" height="3"/><rect x="12" y="1" width="3" height="3"/><rect x="1" y="12" width="3" height="3"/><rect x="12" y="12" width="3" height="3"/></g><path d="M5.5 2.5H10.5 M5.5 13.5H10.5 M2.5 5.5V10.5 M13.5 5.5V10.5" stroke="#d0d0d0" stroke-width="1"/></svg><svg style="position:absolute;left:16px;top:128px;" width="16" height="16" viewBox="0 0 16 16"><circle cx="8" cy="8" r="6" fill="none" stroke="#d0d0d0" stroke-width="1" stroke-dasharray="2.5 1.2"/><path d="M8 4V12 M4 8H12" stroke="#d0d0d0" stroke-width="0.9"/><path d="M6.6 5L8 3.5L9.4 5 M6.6 11L8 12.5L9.4 11 M5 6.6L3.5 8L5 9.4 M11 6.6L12.5 8L11 9.4" fill="none" stroke="#d0d0d0" stroke-width="1"/><path d="M0.5 15.5L3.5 12.5V15.5Z M15.5 0.5L12.5 3.5V0.5Z" fill="#d0d0d0"/></svg><div style="position:absolute;left:189px;top:9px;width:16px;height:1px;background:#6f7b8b;"></div><div style="position:absolute;left:189px;top:12px;width:16px;height:1px;background:#6f7b8b;"></div><svg style="position:absolute;left:210px;top:45px;" width="20" height="15" viewBox="0 0 20 15"><path d="M0.5 0.5Q3 7.5 0.5 14.5L19 7.5Z" fill="#c8c8c8"/></svg><svg style="position:absolute;left:231px;top:61px;" width="14" height="18" viewBox="0 0 14 18"><path d="M7 0.5L13.5 17.5Q7 15.5 0.5 17.5Z" fill="#c8c8c8"/></svg><svg style="position:absolute;left:231.5px;top:26.5px;" width="13" height="17" viewBox="0 0 13 17"><path d="M0.5 0.5Q6.5 2.5 12.5 0.5L6.5 16.5Z" fill="#8fe35a"/></svg><svg style="position:absolute;left:246px;top:47px;" width="19" height="12" viewBox="0 0 19 12"><path d="M18.5 0.5Q17 6 18.5 11.5L0.5 6Z" fill="#d94f3f"/></svg><div style="position:absolute;left:231px;top:47px;width:14px;height:12px;background:#f0f2f6;"></div><div style="position:absolute;left:243px;top:47px;width:2px;height:12px;background:#8f949c;"></div><div style="position:absolute;left:234.5px;top:11.5px;font-size:12px;line-height:12px;color:#e8e8e8;font-weight:700;white-space:nowrap;">y</div><div style="position:absolute;left:268.5px;top:45.5px;font-size:12px;line-height:12px;color:#e8e8e8;font-weight:700;white-space:nowrap;">x</div><svg style="position:absolute;left:266px;top:17px;" width="9" height="9" viewBox="0 0 9 9"><path d="M2 4V2.5a2.2 2.2 0 0 1 4.4 0" fill="none" stroke="#d8d8d8" stroke-width="1.1"/><rect x="0.5" y="4" width="8" height="5" fill="#d8d8d8"/></svg><div style="position:absolute;left:221px;top:100px;width:10px;height:1px;background:#c8d0da;"></div><div style="position:absolute;left:221px;top:103px;width:10px;height:1px;background:#c8d0da;"></div><div style="position:absolute;left:221px;top:106px;width:10px;height:1px;background:#c8d0da;"></div><div style="position:absolute;left:234.5px;top:98px;font-size:12.5px;line-height:12.5px;color:#c8d0da;font-weight:400;white-space:nowrap;">Iso</div></div><div style="position:absolute;left:561px;top:0px;width:2px;height:451px;background:#191919;"></div><div style="position:absolute;left:563px;top:0px;width:342px;height:451px;background:#383838;"></div><div style="position:absolute;left:563px;top:0px;width:342px;height:20px;background:#191919;"></div><div style="position:absolute;left:563px;top:0px;width:95px;height:20px;background:#3c3c3c;"></div><svg style="position:absolute;left:573px;top:4px;" width="11" height="11" viewBox="0 0 11 11"><circle cx="5.5" cy="5.5" r="5.3" fill="#c4c4c4"/><rect x="4.7" y="4.5" width="1.7" height="4.5" fill="#3c3c3c"/><rect x="3.8" y="8.2" width="3.5" height="1" fill="#3c3c3c"/><rect x="3.8" y="4.5" width="2.5" height="1" fill="#3c3c3c"/><circle cx="5.5" cy="2.8" r="1" fill="#3c3c3c"/></svg><div style="position:absolute;left:589px;top:2.5px;font-size:12.5px;line-height:12.5px;color:#c4c4c4;font-weight:400;white-space:nowrap;">Inspector</div><svg style="position:absolute;left:873.5px;top:2.5px;" width="10" height="11" viewBox="0 0 10 11"><path d="M2.3 3.2Q4.3 0.9 6.6 1.9Q7.9 2.7 7.9 5.9" fill="none" stroke="#c8c8c8" stroke-width="1.1"/><rect x="0.9" y="5.9" width="7.6" height="4.3" rx="0.5" fill="none" stroke="#c8c8c8" stroke-width="1.1"/></svg><svg style="position:absolute;left:893px;top:2px;" width="4" height="13" viewBox="0 0 4 13"><g fill="#c4c4c4"><rect x="1" y="1.5" width="2.1" height="2.1"/><rect x="1" y="5.5" width="2.1" height="2.1"/><rect x="1" y="9.5" width="2.1" height="2.1"/></g></svg><div style="position:absolute;left:563px;top:20px;width:333px;height:110px;background:#3e3e3e;"></div><div style="position:absolute;left:563px;top:130px;width:333px;height:1px;background:#232323;"></div><svg style="position:absolute;left:570px;top:30px;" width="21" height="22" viewBox="0 0 21 22"><path d="M10.5 0.5L20.5 5.5V16.5L10.5 21.5L0.5 16.5V5.5Z" fill="#86d4fa"/><path d="M1 5.8L10.5 10.5L20 5.8 M10.5 10.5V21.3" fill="none" stroke="#30414a" stroke-width="1.3"/></svg><svg style="position:absolute;left:590px;top:51px;" width="7" height="4.5" viewBox="0 0 7 4.5"><path d="M0 0L7 0L3.5 4.5Z" fill="#c4c4c4"/></svg><div style="position:absolute;left:608px;top:31px;width:14px;height:14px;background:#2a2a2a;border:1px solid #242424;border-radius:3px;"></div><svg style="position:absolute;left:610px;top:33px;" width="10" height="10" viewBox="0 0 10 10"><path d="M1.5 5.2L4 7.8L8.8 2.2" fill="none" stroke="#e6e6e6" stroke-width="1.5"/></svg><div style="position:absolute;left:628px;top:29px;width:188px;height:17.5px;background:#2a2a2a;border:1px solid #242424;border-radius:3px;"></div><div style="position:absolute;left:631px;top:33px;font-size:13px;line-height:13px;color:#d8d8d8;font-weight:700;white-space:nowrap;letter-spacing:0.3px;">CategoryButton_Weapons</div><div style="position:absolute;left:819px;top:31px;width:14px;height:14px;background:#2a2a2a;border:1px solid #242424;border-radius:3px;"></div><div style="position:absolute;left:837px;top:33px;font-size:12.5px;line-height:12.5px;color:#c4c4c4;font-weight:400;white-space:nowrap;">Static</div><svg style="position:absolute;left:883px;top:36px;" width="8" height="5" viewBox="0 0 8 5"><path d="M0 0L8 0L4.0 5Z" fill="#c4c4c4"/></svg><div style="position:absolute;left:604px;top:56px;font-size:12.5px;line-height:12.5px;color:#c4c4c4;font-weight:400;white-space:nowrap;">Tag</div><div style="position:absolute;left:628px;top:54px;width:112px;height:16px;background:#515151;border:1px solid #303030;border-radius:3px;"></div><div style="position:absolute;left:631px;top:56px;font-size:12.5px;line-height:12.5px;color:#c4c4c4;font-weight:400;white-space:nowrap;">Untagged</div><svg style="position:absolute;left:727px;top:60px;" width="8" height="5" viewBox="0 0 8 5"><path d="M0 0L8 0L4.0 5Z" fill="#c4c4c4"/></svg><div style="position:absolute;left:755px;top:56px;font-size:12.5px;line-height:12.5px;color:#c4c4c4;font-weight:400;white-space:nowrap;">Layer</div><div style="position:absolute;left:790px;top:54px;width:101.5px;height:16.5px;background:#515151;border:1px solid #303030;border-radius:3px;"></div><div style="position:absolute;left:793px;top:56px;font-size:12.5px;line-height:12.5px;color:#c4c4c4;font-weight:400;white-space:nowrap;">UI</div><svg style="position:absolute;left:877px;top:60px;" width="8" height="5" viewBox="0 0 8 5"><path d="M0 0L8 0L4.0 5Z" fill="#c4c4c4"/></svg><div style="position:absolute;left:585px;top:88px;font-size:12.5px;line-height:12.5px;color:#c4c4c4;font-weight:400;white-space:nowrap;">Prefab</div><div style="position:absolute;left:627px;top:85px;width:265px;height:17.5px;background:#2a2a2a;border:1px solid #242424;border-radius:3px;"></div><svg style="position:absolute;left:631px;top:89.5px;" width="11" height="12" viewBox="0 0 11 12"><path d="M5.5 0.3L10.7 2.9V8.7L5.5 11.3L0.3 8.7V2.9Z" fill="#86d4fa"/><path d="M0.6 3.1L5.5 5.6L10.4 3.1 M5.5 5.6V11.2" fill="none" stroke="#30414a" stroke-width="1"/></svg><div style="position:absolute;left:644px;top:89px;font-size:12.5px;line-height:12.5px;color:#c4c4c4;font-weight:400;white-space:nowrap;">TownButton</div><div style="position:absolute;left:873px;top:86px;width:18px;height:15.5px;background:#333333;border-radius:0 3px 3px 0;"></div><svg style="position:absolute;left:876px;top:88px;" width="12" height="12" viewBox="0 0 12 12"><circle cx="6" cy="6" r="5" fill="none" stroke="#c4c4c4" stroke-width="1.1"/><circle cx="6" cy="6" r="1.8" fill="#c4c4c4"/></svg><div style="position:absolute;left:628px;top:108px;width:93px;height:16.5px;background:#515151;border:1px solid #303030;border-radius:3px;"></div><div style="position:absolute;left:631px;top:111px;font-size:12.5px;line-height:12.5px;color:#c4c4c4;font-weight:400;white-space:nowrap;">Overrides</div><svg style="position:absolute;left:708px;top:113px;" width="8" height="5" viewBox="0 0 8 5"><path d="M0 0L8 0L4.0 5Z" fill="#c4c4c4"/></svg><div style="position:absolute;left:756px;top:107.5px;width:67px;height:17px;background:#585858;border:1px solid #303030;border-radius:3px;"></div><div style="position:absolute;left:771px;top:111px;font-size:12.5px;line-height:12.5px;color:#c4c4c4;font-weight:400;white-space:nowrap;">Select</div><div style="position:absolute;left:827px;top:107.5px;width:62px;height:17px;background:#585858;border:1px solid #303030;border-radius:3px;"></div><div style="position:absolute;left:843px;top:111px;font-size:12.5px;line-height:12.5px;color:#c4c4c4;font-weight:400;white-space:nowrap;">Open</div><div style="position:absolute;left:563px;top:131px;width:333px;height:20px;background:#3e3e3e;"></div><div style="position:absolute;left:563px;top:151px;width:333px;height:1px;background:#2a2a2a;"></div><svg style="position:absolute;left:569px;top:138px;" width="9" height="8" viewBox="0 0 9 8"><path d="M0 0L9 0L4.5 8Z" fill="#7f7f7f"/></svg><svg style="position:absolute;left:584px;top:134px;" width="14" height="14" viewBox="0 0 14 14"><g fill="#d0d0d0"><path d="M0.5 0.5L5 2L2 5Z M13.5 0.5L9 2L12 5Z M0.5 13.5L5 12L2 9Z M13.5 13.5L9 12L12 9Z"/><path d="M2 2L5.5 5.5 M12 2L8.5 5.5 M2 12L5.5 8.5 M12 12L8.5 8.5" stroke="#d0d0d0" stroke-width="1.5"/></g></svg><div style="position:absolute;left:623.5px;top:136px;font-size:12px;line-height:12px;color:#d2d2d2;font-weight:700;white-space:nowrap;">Rect Transform</div><svg style="position:absolute;left:838px;top:136px;" width="11" height="11" viewBox="0 0 11 11"><circle cx="5.5" cy="5.5" r="5.3" fill="#c4c4c4"/><path d="M3.7 4.2Q3.7 2.3 5.5 2.3Q7.3 2.3 7.3 4Q7.3 5 6 5.6V6.6" fill="none" stroke="#3e3e3e" stroke-width="1.3"/><circle cx="5.9" cy="8.4" r="0.8" fill="#3e3e3e"/></svg><svg style="position:absolute;left:857px;top:135px;" width="12" height="12" viewBox="0 0 12 12"><path d="M0.5 3.5H11.5 M0.5 8.5H11.5" stroke="#c4c4c4" stroke-width="1.1"/><path d="M7.5 1V6 M4 6V11" stroke="#c4c4c4" stroke-width="1.4"/></svg><svg style="position:absolute;left:880.5px;top:135px;" width="4" height="13" viewBox="0 0 4 13"><g fill="#c4c4c4"><rect x="1" y="1.5" width="2.1" height="2.1"/><rect x="1" y="5.5" width="2.1" height="2.1"/><rect x="1" y="9.5" width="2.1" height="2.1"/></g></svg><div style="position:absolute;left:581px;top:156.5px;width:310.5px;height:17px;background:#3e3e3e;border:1px solid #2b2b2b;border-radius:3px;"></div><div style="position:absolute;left:585px;top:160.5px;font-size:10.5px;line-height:10.5px;color:#bdbdbd;font-weight:400;white-space:nowrap;">Some values driven by HorizontalLayoutGroup.</div><div style="position:absolute;left:600px;top:183px;font-size:11px;line-height:11px;color:#c4c4c4;font-weight:400;white-space:nowrap;">left</div><div style="position:absolute;left:570.5px;top:211px;font-size:11px;line-height:11px;color:#c4c4c4;font-weight:transform-origin:0 0;transform:rotate(-90deg);;white-space:nowrap;">top</div><div style="position:absolute;left:590px;top:200px;width:35px;height:35px;background:transparent;border-top:1px solid #c45050;border-left:1px solid #c45050;border-right:1px solid #7a7a7a;border-bottom:1px solid #7a7a7a;"></div><div style="position:absolute;left:599px;top:209px;width:17px;height:17px;background:transparent;border:1px solid #c4c4c4;"></div><div style="position:absolute;left:589px;top:199px;width:3px;height:3px;background:#e8b000;"></div><div style="position:absolute;left:701px;top:182.5px;font-size:12px;line-height:12px;color:#7b7b7b;font-weight:700;white-space:nowrap;">Pos X</div><div style="position:absolute;left:766px;top:182.5px;font-size:12px;line-height:12px;color:#7b7b7b;font-weight:700;white-space:nowrap;">Pos Y</div><div style="position:absolute;left:830px;top:182.5px;font-size:12px;line-height:12px;color:#d2d2d2;font-weight:700;white-space:nowrap;">Pos Z</div><div style="position:absolute;left:701px;top:196.5px;width:61.5px;height:17px;background:#303030;border:1px solid #242424;border-radius:3px;"></div><div style="position:absolute;left:703.5px;top:200.0px;font-size:12.5px;line-height:12.5px;color:#7b7b7b;font-weight:400;white-space:nowrap;">375</div><div style="position:absolute;left:766px;top:196.5px;width:61.5px;height:17px;background:#303030;border:1px solid #242424;border-radius:3px;"></div><div style="position:absolute;left:768.5px;top:200.0px;font-size:12.5px;line-height:12.5px;color:#7b7b7b;font-weight:400;white-space:nowrap;">-25</div><div style="position:absolute;left:830px;top:196.5px;width:61.5px;height:17px;background:#2a2a2a;border:1px solid #242424;border-radius:3px;"></div><div style="position:absolute;left:832.5px;top:200.0px;font-size:12.5px;line-height:12.5px;color:#c4c4c4;font-weight:400;white-space:nowrap;">0</div><div style="position:absolute;left:701px;top:218.5px;font-size:12px;line-height:12px;color:#d2d2d2;font-weight:700;white-space:nowrap;">Width</div><div style="position:absolute;left:766px;top:218.5px;font-size:12px;line-height:12px;color:#d2d2d2;font-weight:700;white-space:nowrap;">Height</div><div style="position:absolute;left:701px;top:232.5px;width:61.5px;height:17px;background:#2a2a2a;border:1px solid #242424;border-radius:3px;"></div><div style="position:absolute;left:703.5px;top:236.0px;font-size:12.5px;line-height:12.5px;color:#d2d2d2;font-weight:400;white-space:nowrap;">180</div><div style="position:absolute;left:766px;top:232.5px;width:61.5px;height:17px;background:#2a2a2a;border:1px solid #242424;border-radius:3px;"></div><div style="position:absolute;left:768.5px;top:236.0px;font-size:12.5px;line-height:12.5px;color:#d2d2d2;font-weight:400;white-space:nowrap;">48</div><div style="position:absolute;left:841px;top:231px;width:50px;height:18px;background:#575757;border-radius:3px;box-shadow:0 1px 0 #2a2a2a;"></div><div style="position:absolute;left:864.5px;top:231px;width:1px;height:18px;background:#2e2e2e;"></div><svg style="position:absolute;left:847px;top:234px;" width="12" height="12" viewBox="0 0 12 12"><path d="M1 3.5V1H3.5 M8.5 1H11V3.5 M11 8.5V11H8.5 M3.5 11H1V8.5 M5 1H7 M5 11H7 M1 5V7 M11 5V7" fill="none" stroke="#bdbdbd" stroke-width="1"/></svg><div style="position:absolute;left:874.5px;top:235.5px;font-size:11px;line-height:11px;color:#b0b0b0;font-weight:400;white-space:nowrap;">R</div><svg style="position:absolute;left:571px;top:257px;" width="8" height="9" viewBox="0 0 8 9"><path d="M0 0L8 4.5L0 9Z" fill="#7f7f7f"/></svg><div style="position:absolute;left:582.5px;top:256px;font-size:12px;line-height:12px;color:#d2d2d2;font-weight:700;white-space:nowrap;">Anchors</div><div style="position:absolute;left:582.5px;top:276px;font-size:12px;line-height:12px;color:#d2d2d2;font-weight:700;white-space:nowrap;">Pivot</div><div style="position:absolute;left:701px;top:276px;font-size:12.5px;line-height:12.5px;color:#d2d2d2;font-weight:400;white-space:nowrap;">X</div><div style="position:absolute;left:712.5px;top:272px;width:49px;height:17px;background:#2a2a2a;border:1px solid #242424;border-radius:3px;"></div><div style="position:absolute;left:715.0px;top:275.5px;font-size:12.5px;line-height:12.5px;color:#d2d2d2;font-weight:400;white-space:nowrap;">0.5</div><div style="position:absolute;left:766px;top:276px;font-size:12.5px;line-height:12.5px;color:#d2d2d2;font-weight:400;white-space:nowrap;">Y</div><div style="position:absolute;left:777px;top:272px;width:49.5px;height:17px;background:#2a2a2a;border:1px solid #242424;border-radius:3px;"></div><div style="position:absolute;left:779.5px;top:275.5px;font-size:12.5px;line-height:12.5px;color:#d2d2d2;font-weight:400;white-space:nowrap;">0.5</div><div style="position:absolute;left:582.5px;top:303.5px;font-size:12px;line-height:12px;color:#d2d2d2;font-weight:700;white-space:nowrap;">Rotation</div><div style="position:absolute;left:704.5px;top:303.5px;font-size:12.5px;line-height:12.5px;color:#d2d2d2;font-weight:400;white-space:nowrap;">X</div><div style="position:absolute;left:719.5px;top:300px;width:43px;height:17.5px;background:#2a2a2a;border:1px solid #242424;border-radius:3px;"></div><div style="position:absolute;left:722.0px;top:303.5px;font-size:12.5px;line-height:12.5px;color:#d2d2d2;font-weight:400;white-space:nowrap;">0</div><div style="position:absolute;left:768.5px;top:303.5px;font-size:12.5px;line-height:12.5px;color:#d2d2d2;font-weight:400;white-space:nowrap;">Y</div><div style="position:absolute;left:783px;top:300px;width:43.5px;height:17.5px;background:#2a2a2a;border:1px solid #242424;border-radius:3px;"></div><div style="position:absolute;left:785.5px;top:303.5px;font-size:12.5px;line-height:12.5px;color:#d2d2d2;font-weight:400;white-space:nowrap;">0</div><div style="position:absolute;left:833px;top:303.5px;font-size:12.5px;line-height:12.5px;color:#d2d2d2;font-weight:400;white-space:nowrap;">Z</div><div style="position:absolute;left:848.5px;top:300px;width:43px;height:17.5px;background:#2a2a2a;border:1px solid #242424;border-radius:3px;"></div><div style="position:absolute;left:851.0px;top:303.5px;font-size:12.5px;line-height:12.5px;color:#d2d2d2;font-weight:400;white-space:nowrap;">0</div><div style="position:absolute;left:582.5px;top:323.5px;font-size:12.5px;line-height:12.5px;color:#bdbdbd;font-weight:400;white-space:nowrap;">Scale</div><svg style="position:absolute;left:682px;top:324px;" width="13" height="11" viewBox="0 0 13 11"><path d="M2.5 2.5L10.5 9.5" stroke="#c4c4c4" stroke-width="1.1"/><path d="M4.5 3H9a2.5 2.5 0 0 1 0 5H8 M8.5 8.5H4a2.5 2.5 0 0 1 0-5" fill="none" stroke="#c4c4c4" stroke-width="1.1"/></svg><div style="position:absolute;left:704px;top:323.5px;font-size:12.5px;line-height:12.5px;color:#9a9a9a;font-weight:400;white-space:nowrap;">X</div><div style="position:absolute;left:718.5px;top:320px;width:44px;height:17.5px;background:#2a2a2a;border:1px solid #242424;border-radius:3px;"></div><div style="position:absolute;left:721.0px;top:323.5px;font-size:12.5px;line-height:12.5px;color:#c4c4c4;font-weight:400;white-space:nowrap;">1</div><div style="position:absolute;left:768.5px;top:323.5px;font-size:12.5px;line-height:12.5px;color:#9a9a9a;font-weight:400;white-space:nowrap;">Y</div><div style="position:absolute;left:783px;top:320px;width:43.5px;height:17.5px;background:#2a2a2a;border:1px solid #242424;border-radius:3px;"></div><div style="position:absolute;left:785.5px;top:323.5px;font-size:12.5px;line-height:12.5px;color:#c4c4c4;font-weight:400;white-space:nowrap;">1</div><div style="position:absolute;left:833px;top:323.5px;font-size:12.5px;line-height:12.5px;color:#9a9a9a;font-weight:400;white-space:nowrap;">Z</div><div style="position:absolute;left:847.5px;top:320px;width:44px;height:17.5px;background:#2a2a2a;border:1px solid #242424;border-radius:3px;"></div><div style="position:absolute;left:850.0px;top:323.5px;font-size:12.5px;line-height:12.5px;color:#c4c4c4;font-weight:400;white-space:nowrap;">1</div><div style="position:absolute;left:563px;top:348px;width:333px;height:1px;background:#2a2a2a;"></div><div style="position:absolute;left:563px;top:349px;width:333px;height:21px;background:#3e3e3e;"></div><div style="position:absolute;left:563px;top:370px;width:333px;height:1px;background:#2a2a2a;"></div><svg style="position:absolute;left:570px;top:355px;" width="8" height="9" viewBox="0 0 8 9"><path d="M0 0L8 4.5L0 9Z" fill="#7f7f7f"/></svg><svg style="position:absolute;left:583px;top:351px;" width="17" height="15" viewBox="0 0 17 15"><path d="M0.8 7.5Q8.5 -1.5 16.2 7.5Q8.5 16.5 0.8 7.5Z" fill="none" stroke="#d0d0d0" stroke-width="1.3"/><circle cx="8.5" cy="7.5" r="2.8" fill="none" stroke="#d0d0d0" stroke-width="1.3"/></svg><div style="position:absolute;left:623.5px;top:354px;font-size:12px;line-height:12px;color:#d2d2d2;font-weight:700;white-space:nowrap;">Canvas Renderer</div><svg style="position:absolute;left:838px;top:354px;" width="11" height="11" viewBox="0 0 11 11"><circle cx="5.5" cy="5.5" r="5.3" fill="#c4c4c4"/><path d="M3.7 4.2Q3.7 2.3 5.5 2.3Q7.3 2.3 7.3 4Q7.3 5 6 5.6V6.6" fill="none" stroke="#3e3e3e" stroke-width="1.3"/><circle cx="5.9" cy="8.4" r="0.8" fill="#3e3e3e"/></svg><svg style="position:absolute;left:857px;top:353px;" width="12" height="12" viewBox="0 0 12 12"><path d="M0.5 3.5H11.5 M0.5 8.5H11.5" stroke="#c4c4c4" stroke-width="1.1"/><path d="M7.5 1V6 M4 6V11" stroke="#c4c4c4" stroke-width="1.4"/></svg><svg style="position:absolute;left:880.5px;top:353px;" width="4" height="13" viewBox="0 0 4 13"><g fill="#c4c4c4"><rect x="1" y="1.5" width="2.1" height="2.1"/><rect x="1" y="5.5" width="2.1" height="2.1"/><rect x="1" y="9.5" width="2.1" height="2.1"/></g></svg><div style="position:absolute;left:563px;top:371px;width:333px;height:20px;background:#3e3e3e;"></div><div style="position:absolute;left:563px;top:391px;width:333px;height:1px;background:#2a2a2a;"></div><svg style="position:absolute;left:569px;top:378px;" width="9" height="8" viewBox="0 0 9 8"><path d="M0 0L9 0L4.5 8Z" fill="#7f7f7f"/></svg><svg style="position:absolute;left:584px;top:373px;" width="14" height="15" viewBox="0 0 14 15"><rect x="1.5" y="2" width="11" height="11" fill="none" stroke="#d0d0d0" stroke-width="1.1"/><path d="M3 11L6 7.5L8 9.5L9.5 8L11 11Z" fill="#d0d0d0"/><circle cx="9" cy="5" r="1.1" fill="#d0d0d0"/><rect x="0" y="0.5" width="3" height="3" fill="#d0d0d0"/><rect x="11" y="0.5" width="3" height="3" fill="#d0d0d0"/><rect x="0" y="11.5" width="3" height="3" fill="#d0d0d0"/><rect x="11" y="11.5" width="3" height="3" fill="#d0d0d0"/></svg><div style="position:absolute;left:603px;top:374px;width:14px;height:14px;background:#2a2a2a;border:1px solid #242424;border-radius:3px;"></div><svg style="position:absolute;left:605px;top:376px;" width="10" height="10" viewBox="0 0 10 10"><path d="M1.5 5.2L4 7.8L8.8 2.2" fill="none" stroke="#e6e6e6" stroke-width="1.5"/></svg><div style="position:absolute;left:623.5px;top:376px;font-size:12px;line-height:12px;color:#d2d2d2;font-weight:700;white-space:nowrap;">Image</div><svg style="position:absolute;left:838px;top:376px;" width="11" height="11" viewBox="0 0 11 11"><circle cx="5.5" cy="5.5" r="5.3" fill="#c4c4c4"/><path d="M3.7 4.2Q3.7 2.3 5.5 2.3Q7.3 2.3 7.3 4Q7.3 5 6 5.6V6.6" fill="none" stroke="#3e3e3e" stroke-width="1.3"/><circle cx="5.9" cy="8.4" r="0.8" fill="#3e3e3e"/></svg><svg style="position:absolute;left:857px;top:375px;" width="12" height="12" viewBox="0 0 12 12"><path d="M0.5 3.5H11.5 M0.5 8.5H11.5" stroke="#c4c4c4" stroke-width="1.1"/><path d="M7.5 1V6 M4 6V11" stroke="#c4c4c4" stroke-width="1.4"/></svg><svg style="position:absolute;left:880.5px;top:375px;" width="4" height="13" viewBox="0 0 4 13"><g fill="#c4c4c4"><rect x="1" y="1.5" width="2.1" height="2.1"/><rect x="1" y="5.5" width="2.1" height="2.1"/><rect x="1" y="9.5" width="2.1" height="2.1"/></g></svg><div style="position:absolute;left:582.5px;top:400px;font-size:12.5px;line-height:12.5px;color:#c4c4c4;font-weight:400;white-space:nowrap;">Source Image</div><div style="position:absolute;left:703.5px;top:395.5px;width:188px;height:17px;background:#2a2a2a;border:1px solid #242424;border-radius:3px;"></div><svg style="position:absolute;left:706.5px;top:399.5px;" width="11" height="11" viewBox="0 0 11 11"><rect x="1" y="1" width="9" height="9" fill="none" stroke="#4f3f78" stroke-width="1"/><g fill="#9a7ad6"><rect x="0" y="0" width="2.2" height="2.2"/><rect x="8.8" y="0" width="2.2" height="2.2"/><rect x="0" y="8.8" width="2.2" height="2.2"/><rect x="8.8" y="8.8" width="2.2" height="2.2"/></g><circle cx="5.5" cy="5.5" r="2.1" fill="#d0d0d0"/></svg><div style="position:absolute;left:719px;top:400px;font-size:12.5px;line-height:12.5px;color:#c4c4c4;font-weight:400;white-space:nowrap;">CircleButton_B</div><div style="position:absolute;left:873px;top:396.5px;width:18px;height:15px;background:#333333;border-radius:0 3px 3px 0;"></div><svg style="position:absolute;left:876px;top:398px;" width="12" height="12" viewBox="0 0 12 12"><circle cx="6" cy="6" r="5" fill="none" stroke="#c4c4c4" stroke-width="1.1"/><circle cx="6" cy="6" r="1.8" fill="#c4c4c4"/></svg><div style="position:absolute;left:582.5px;top:420px;font-size:12.5px;line-height:12.5px;color:#c4c4c4;font-weight:400;white-space:nowrap;">Color</div><div style="position:absolute;left:703.5px;top:415.5px;width:188px;height:17px;background:#2a2a2a;border:1px solid #242424;border-radius:3px;"></div><div style="position:absolute;left:704px;top:416.5px;width:169px;height:15.5px;background:#ffffff;"></div><svg style="position:absolute;left:877px;top:417.5px;" width="13" height="13" viewBox="0 0 13 13"><path d="M1.5 11.5L7.2 5.8" stroke="#c8c8c8" stroke-width="2.6" stroke-linecap="round"/><path d="M6 4L9 7" stroke="#c8c8c8" stroke-width="2.2"/><path d="M8.2 4.8L10.2 2.8" stroke="#c8c8c8" stroke-width="3.2" stroke-linecap="round"/><path d="M4.2 8.2L5.2 7.2" stroke="#333" stroke-width="0.9"/></svg><div style="position:absolute;left:582.5px;top:439px;font-size:12.5px;line-height:12.5px;color:#c4c4c4;font-weight:400;white-space:nowrap;">Material</div><div style="position:absolute;left:703.5px;top:436px;width:188px;height:17px;background:#2a2a2a;border:1px solid #242424;border-radius:3px;"></div><div style="position:absolute;left:707px;top:440px;font-size:12.5px;line-height:12.5px;color:#7b7b7b;font-weight:400;white-space:nowrap;">None (Material)</div><div style="position:absolute;left:873px;top:437px;width:18px;height:15px;background:#333333;border-radius:0 3px 3px 0;"></div><svg style="position:absolute;left:876px;top:438.5px;" width="12" height="12" viewBox="0 0 12 12"><circle cx="6" cy="6" r="5" fill="none" stroke="#c4c4c4" stroke-width="1.1"/><circle cx="6" cy="6" r="1.8" fill="#c4c4c4"/></svg><div style="position:absolute;left:896px;top:20px;width:9px;height:431px;background:#2e2e2e;"></div><svg style="position:absolute;left:899px;top:26px;" width="7" height="4" viewBox="0 0 7 4"><path d="M0 4L3.5 0L7 4Z" fill="#c4c4c4"/></svg><div style="position:absolute;left:898px;top:37px;width:8px;height:385px;background:#5e5e5e;border-radius:4px;"></div></div></body></html>
